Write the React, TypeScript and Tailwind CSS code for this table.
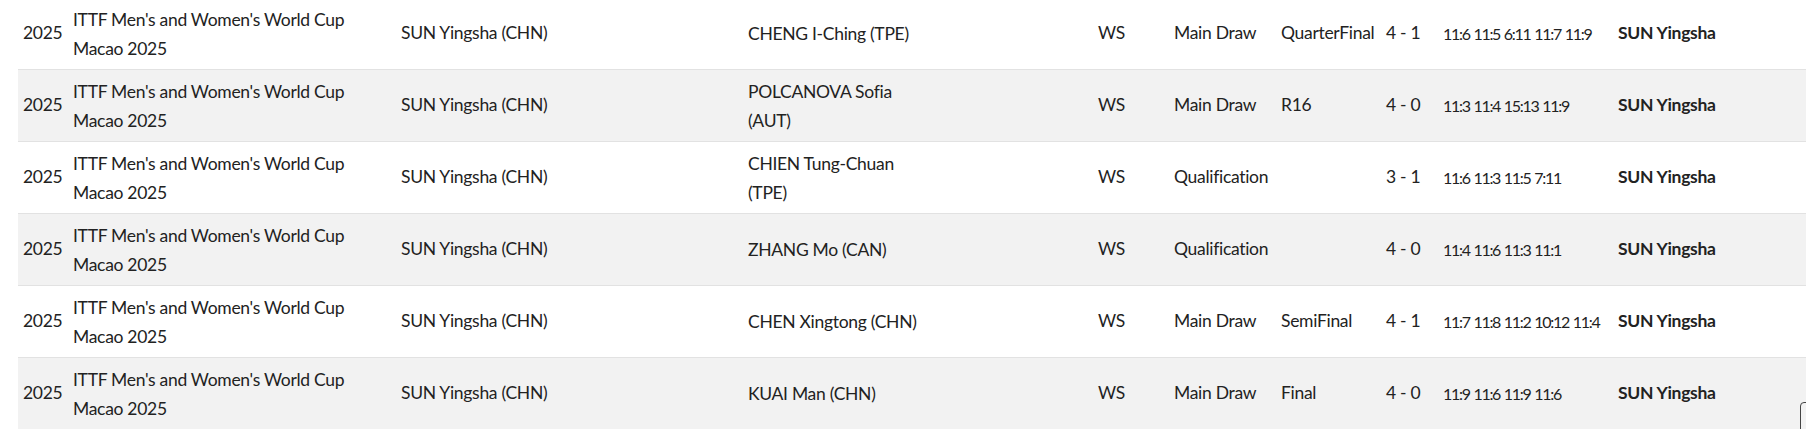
const matches = [
  { opponent: "CHENG I-Ching (TPE)", stage: "Main Draw", round: "QuarterFinal", result: "4 - 1", games: "11:6 11:5 6:11 11:7 11:9" },
  { opponent: "POLCANOVA Sofia (AUT)", stage: "Main Draw", round: "R16", result: "4 - 0", games: "11:3 11:4 15:13 11:9" },
  { opponent: "CHIEN Tung-Chuan (TPE)", stage: "Qualification", round: "", result: "3 - 1", games: "11:6 11:3 11:5 7:11" },
  { opponent: "ZHANG Mo (CAN)", stage: "Qualification", round: "", result: "4 - 0", games: "11:4 11:6 11:3 11:1" },
  { opponent: "CHEN Xingtong (CHN)", stage: "Main Draw", round: "SemiFinal", result: "4 - 1", games: "11:7 11:8 11:2 10:12 11:4" },
  { opponent: "KUAI Man (CHN)", stage: "Main Draw", round: "Final", result: "4 - 0", games: "11:9 11:6 11:9 11:6" },
];

export default function App() {
  return (
    <div className="relative h-[429px] overflow-hidden bg-white font-['Lato',sans-serif] text-[17.5px] tracking-[-0.3px] text-[#222]">
      <div className="-mt-[2px] pl-[18px]">
        {matches.map((m, i) => (
          <div
            key={i}
            className={
              "grid h-[72px] grid-cols-[50px_328px_347px_350px_76px_107px_105px_57px_175px_1fr] items-center border-b border-[#e2e2e2] " +
              (i % 2 === 1 ? "bg-[#f2f2f2]" : "bg-white")
            }
          >
            <div className="px-[5px]">2025</div>
            <div className="px-[5px]">
              <div className="max-w-[300px] leading-[29px]">ITTF Men's and Women's World Cup Macao 2025</div>
            </div>
            <div className="px-[5px] whitespace-nowrap">SUN Yingsha (CHN)</div>
            <div className="px-[5px]">
              <div className="max-w-[185px] leading-[29px]">{m.opponent}</div>
            </div>
            <div className="px-[5px]">WS</div>
            <div className="px-[5px] whitespace-nowrap">{m.stage}</div>
            <div className="px-[5px] whitespace-nowrap">{m.round}</div>
            <div className="px-[5px] whitespace-nowrap">{m.result}</div>
            <div className="px-[5px] whitespace-nowrap text-[16px] tracking-[-1.3px] [word-spacing:1px]">{m.games}</div>
            <div className="px-[5px] whitespace-nowrap font-bold">SUN Yingsha</div>
          </div>
        ))}
      </div>
      <div className="absolute left-[1800px] top-[402px] h-[40px] w-[40px] rounded-[4px] border border-[#444]"></div>
    </div>
  );
}
